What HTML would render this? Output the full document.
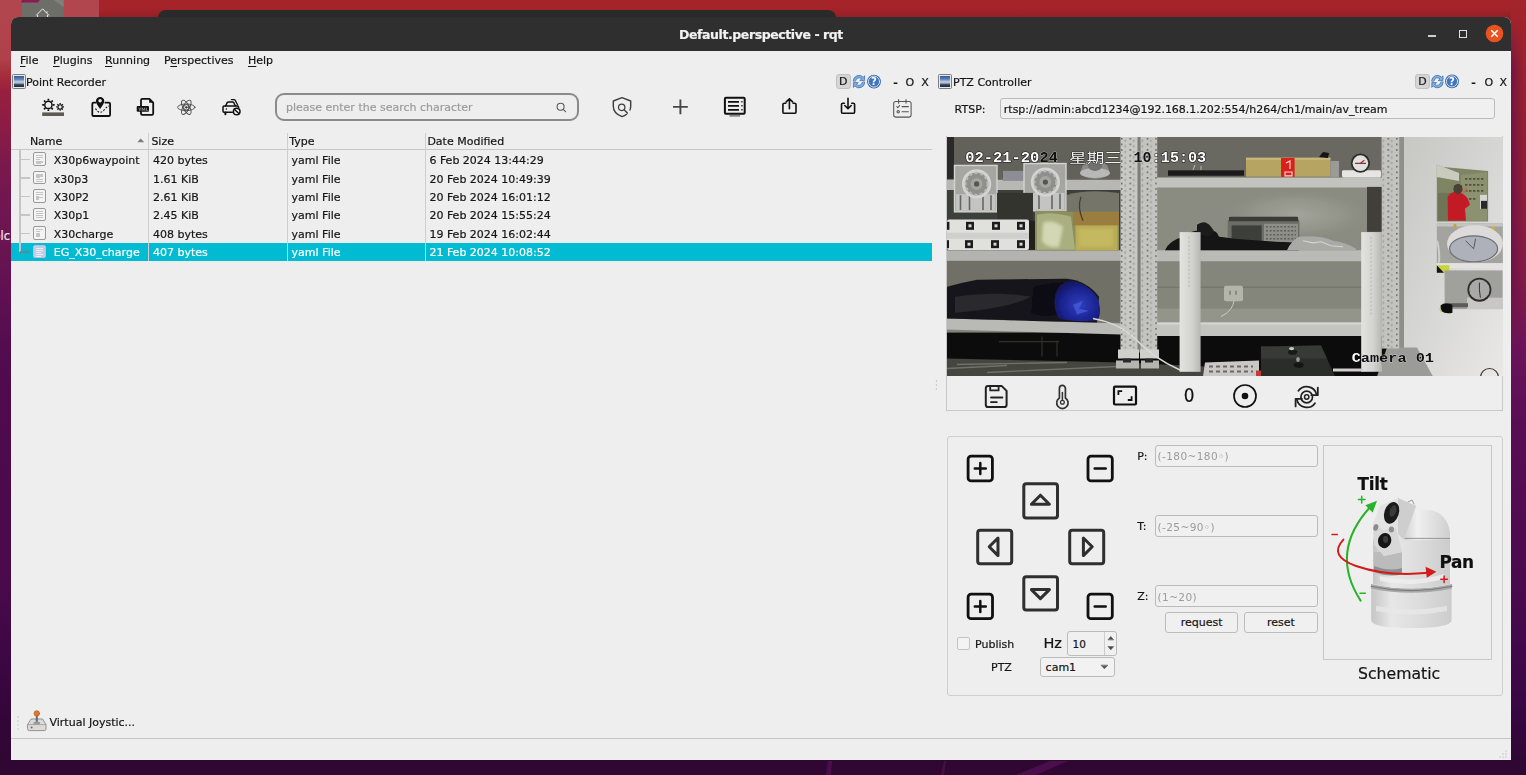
<!DOCTYPE html>
<html lang="en">
<head>
<meta charset="utf-8">
<title>Default.perspective - rqt</title>
<style>
html,body{margin:0;padding:0;}
body{width:1526px;height:775px;overflow:hidden;position:relative;background:#3a0a3a;
 font-family:"DejaVu Sans","Liberation Sans","Noto Sans CJK SC",sans-serif;font-size:11px;color:#161616;-webkit-text-stroke:.2px;}
.abs{position:absolute;}
#desk{position:absolute;left:0;top:0;width:1526px;height:775px;background:#a4242a;}
#deskB{position:absolute;left:0;top:755px;width:1526px;height:20px;background:#300733;}
#deskLs{position:absolute;left:0;top:0;width:14px;height:775px;
 background:linear-gradient(180deg,#b3454e 0px,#b0414c 58px,#a52c3c 76px,#981f3e 92px,#8a1c45 130px,#7d194b 160px,#72164f 200px,#6b1551 240px,#5e1051 300px,#510b4e 360px,#4d0a4d 450px,#4a0a4c 575px,#3e0844 650px,#330638 720px,#300733 760px);}
#deskRs{position:absolute;left:1506px;top:0;width:20px;height:775px;
 background:linear-gradient(180deg,#a3252b 0px,#9f232c 50px,#97202f 100px,#8e1e3a 200px,#821b48 280px,#6a135a 350px,#590e54 420px,#540c52 480px,#4c0a4e 575px,#40084a 650px,#360640 720px,#300733 760px);}
#deskRo{position:absolute;left:1506px;top:20px;width:20px;height:340px;background:linear-gradient(90deg,rgba(105,18,72,.8) 5px,rgba(105,18,72,0) 18px);
 -webkit-mask-image:linear-gradient(180deg,transparent 0,#000 50px,#000 270px,transparent 340px);mask-image:linear-gradient(180deg,transparent 0,#000 50px,#000 270px,transparent 340px);}
#deskL{position:absolute;left:0;top:0;width:99px;height:20px;background:#b2464f;}
#win{opacity:.9999;position:absolute;left:11px;top:17px;width:1500px;height:743.3px;background:#efefef;border-radius:7px 7px 0 0;overflow:hidden;}
#title{position:absolute;left:0;top:0;width:1500px;height:33.5px;background:#303030;}
#title .t{position:absolute;left:0;width:1500px;top:9.7px;text-align:center;color:#f3f3f3;font-weight:bold;font-size:12.5px;line-height:16px;letter-spacing:-0.42px;}
.menu{position:absolute;top:37px;font-size:11px;line-height:14px;}
.menu u{text-decoration-thickness:1px;text-underline-offset:1.5px;}
.docktitle{position:absolute;font-size:11px;line-height:14px;transform:translateY(.7px);white-space:nowrap;}
.hdr{position:absolute;top:117.5px;font-size:11px;line-height:13px;}
.row{position:absolute;left:0;width:921px;height:18.5px;}
.row span{position:absolute;top:3.7px;line-height:13px;white-space:nowrap;}
.row.sel{background:#00bcd4;color:#fff;}
.fi{position:absolute;left:22.2px;top:1.9px;width:10.7px;height:11.7px;border:1px solid #9a9a9a;border-radius:2px;background:#f5f5f5;box-sizing:content-box;}
.fi i{position:absolute;left:2.1px;height:1px;background:#c6c6c6;}
.vsep{position:absolute;width:1px;background:#cfcfcf;}
.le{position:absolute;border:1px solid #bcbcbc;border-radius:3px;background:#f1f1f1;box-sizing:border-box;}
.ph{-webkit-text-stroke:0;transform:translateY(.9px);position:absolute;font-size:10.5px;color:#9c9c9c;line-height:13px;letter-spacing:.4px;}
.btn{position:absolute;border:1px solid #bdbdbd;border-radius:3px;background:#f1f1f1;box-sizing:border-box;text-align:center;font-size:11px;}
</style>
</head>
<body>
<div id="desk"></div>
<div id="deskB"></div>
<svg class="abs" style="left:800px;top:758px;" width="300" height="17" viewBox="800 758 300 17"><path d="M826 775L828 761H832L831 775z" fill="#4b0e4d"/><path d="M941 775L944 761H946L944 775z" fill="#470d4a"/><path d="M1016 775L1050 761H1068L1036 775z" fill="#4a0e4c"/></svg>
<div id="deskLs"></div>
<div id="deskRs"></div>
<div id="deskRo"></div>
<div id="deskL"></div>
<div class="abs" style="left:99px;top:8px;width:1412px;height:12px;background:linear-gradient(180deg,rgba(120,20,30,0),rgba(110,18,30,.35));"></div>
<div class="abs" style="left:-6.5px;top:229px;font-size:11.5px;line-height:14px;color:#f2e6ee;">olc</div>
<!-- items peeking above the window -->
<svg class="abs" style="left:0;top:0;" width="120" height="20" viewBox="0 0 120 20"><rect x="21.6" y="0" width="18" height="3" fill="#8a1a50"/><path d="M21.6 20V4Q21.6 2.4 23.2 2.4H38L40 0H63.7V20z" fill="#6d6e68"/><path d="M54 0H63.7V7L58 3z" fill="#80817b"/><path d="M36.2 15.4L42.6 8.8L49 15.4M37.6 15V17M47.6 15V17M47 11.4V12.8" stroke="#f0f0f0" stroke-width="1" fill="none"/></svg>
<div class="abs" style="left:158px;top:10px;width:678px;height:10px;background:#2a2a2a;border-radius:8px 8px 0 0;"></div>

<div id="win">
 <div id="title"><div class="t">Default.perspective - rqt</div></div>

 <!-- title buttons -->
 <div class="abs" style="left:1417px;top:18px;width:8px;height:1.6px;background:#cfcfcf;"></div>
 <div class="abs" style="left:1448px;top:12.5px;width:8px;height:8px;border:1.5px solid #e0e0e0;box-sizing:border-box;"></div>
 <svg class="abs" style="left:1474px;top:7px;" width="19" height="19" viewBox="0 0 19 19"><circle cx="9.5" cy="9.5" r="8.8" fill="#e95420"/><path d="M6.3 6.3l6.4 6.4M12.7 6.3l-6.4 6.4" stroke="#fff" stroke-width="1.6" fill="none"/></svg>


 <!-- menu bar -->
 <div class="menu" style="left:9px;"><u>F</u>ile</div>
 <div class="menu" style="left:42px;"><u>P</u>lugins</div>
 <div class="menu" style="left:94px;"><u>R</u>unning</div>
 <div class="menu" style="left:153px;">P<u>e</u>rspectives</div>
 <div class="menu" style="left:237px;"><u>H</u>elp</div>


 <!-- left dock: Point Recorder -->
 <div class="abs" style="left:1.2px;top:57.4px;width:13.6px;height:14.4px;border:1px solid #7e7e7e;background:#e9e9e9;box-sizing:border-box;border-radius:1.5px;"><div style="position:absolute;left:1px;top:1px;right:1px;bottom:1px;background:linear-gradient(180deg,#2f5a96 0%,#5d86bd 30%,#c9d7e8 55%,#8d99a8 68%,#2c3f5f 80%,#1f2f4a 100%);"></div></div>
 <div class="docktitle" style="left:15px;top:58px;">Point Recorder</div>
 <div class="abs" style="left:825px;top:57.2px;width:14.6px;height:14.6px;background:#d6d6d6;border:1px solid #c2c2c2;box-sizing:border-box;border-radius:3px;text-align:center;font-size:11px;line-height:14.8px;">D</div>
 <div class="docktitle" style="left:882.2px;top:58px;font-weight:bold;">-</div>
 <div class="docktitle" style="left:894.6px;top:58px;">O</div>
 <div class="docktitle" style="left:910.2px;top:58px;">X</div>
 <!-- search field -->
 <div class="abs" style="left:263.5px;top:76px;width:304.4px;height:28.2px;border:2px solid #8c8c8c;border-radius:9px;box-sizing:border-box;"></div>
 <div class="abs" style="left:275px;top:83.5px;font-size:11px;line-height:14px;color:#9c9c9c;">please enter the search character</div>
 <!-- tree header -->
 <div class="hdr" style="left:18.9px;">Name</div>
 <div class="hdr" style="left:140.4px;">Size</div>
 <div class="hdr" style="left:278.3px;">Type</div>
 <div class="hdr" style="left:416.4px;">Date Modified</div>
 <svg class="abs" style="left:126px;top:120.6px;" width="8" height="5" viewBox="0 0 8 5"><path d="M0.3 4.2L3.7 0.5L7.2 4.2z" fill="#7d7d7d"/></svg>
 <div class="abs" style="left:0;top:132px;width:921px;height:1.3px;background:#c8c8c8;"></div>
 <div class="row" style="top:133.40px;"><div class="fi"><i style="top:2.0px;width:6.5px;height:1.0px;"></i><i style="top:4.0px;width:6.5px;height:1.0px;"></i><i style="top:6.0px;width:3.6px;height:1.0px;"></i><i style="top:8.0px;width:6.5px;height:1.6px;"></i><i style="top:9.6px;width:4.6px;height:1.0px;"></i></div><span style="left:42.8px;">X30p6waypoint</span><span style="left:142px;">420 bytes</span><span style="left:280.6px;">yaml File</span><span style="left:418.4px;">6 Feb 2024 13:44:29</span></div>
 <div class="row" style="top:151.85px;"><div class="fi"><i style="top:2.0px;width:6.5px;height:3.6px;"></i><i style="top:4.4px;width:4.0px;height:1.4px;"></i><i style="top:7.0px;width:6.5px;height:1.0px;"></i><i style="top:9.0px;width:6.5px;height:1.0px;"></i></div><span style="left:42.8px;">x30p3</span><span style="left:142px;">1.61 KiB</span><span style="left:280.6px;">yaml File</span><span style="left:418.4px;">20 Feb 2024 10:49:39</span></div>
 <div class="row" style="top:170.30px;"><div class="fi"><i style="top:2.0px;width:6.5px;height:1.0px;"></i><i style="top:4.0px;width:6.5px;height:1.0px;"></i><i style="top:6.0px;width:3.0px;height:3.0px;"></i><i style="top:7.0px;width:6.5px;height:1.2px;"></i><i style="top:9.0px;width:3.0px;height:1.0px;"></i></div><span style="left:42.8px;">X30P2</span><span style="left:142px;">2.61 KiB</span><span style="left:280.6px;">yaml File</span><span style="left:418.4px;">20 Feb 2024 16:01:12</span></div>
 <div class="row" style="top:188.75px;"><div class="fi"><i style="top:2.0px;width:6.5px;height:1.6px;"></i><i style="top:4.6px;width:6.5px;height:1.0px;"></i><i style="top:6.6px;width:6.5px;height:1.0px;"></i><i style="top:8.6px;width:6.5px;height:1.0px;"></i></div><span style="left:42.8px;">X30p1</span><span style="left:142px;">2.45 KiB</span><span style="left:280.6px;">yaml File</span><span style="left:418.4px;">20 Feb 2024 15:55:24</span></div>
 <div class="row" style="top:207.20px;"><div class="fi"><i style="top:2.0px;width:6.5px;height:1.0px;"></i><i style="top:4.2px;width:4.0px;height:1.0px;"></i><i style="top:6.0px;width:3.4px;height:3.4px;"></i><i style="top:9.4px;width:3.4px;height:1.0px;"></i></div><span style="left:42.8px;">X30charge</span><span style="left:142px;">408 bytes</span><span style="left:280.6px;">yaml File</span><span style="left:418.4px;">19 Feb 2024 16:02:44</span></div>
 <div class="row sel" style="top:225.65px;"><div class="fi" style="border-color:#b9c3dc;background:#c5cee6;"><i style="background:#e9edf7;top:2.0px;width:6.5px;height:1.4px;"></i><i style="background:#e9edf7;top:4.4px;width:6.5px;height:1.0px;"></i><i style="background:#e9edf7;top:6.4px;width:4.4px;height:1.0px;"></i><i style="background:#e9edf7;top:8.4px;width:6.5px;height:1.0px;"></i><i style="background:#e9edf7;top:10.0px;width:5.0px;height:1.0px;"></i></div><span style="left:42.8px;">EG_X30_charge</span><span style="left:142px;">407 bytes</span><span style="left:280.6px;">yaml File</span><span style="left:418.4px;">21 Feb 2024 10:08:52</span></div>
 <div class="abs" style="left:8.2px;top:133.4px;width:1.6px;height:101.8px;background:#c6c6c6;"></div>
 <div class="abs" style="left:8.6px;top:141.90px;width:10.4px;height:1.5px;background:#c6c6c6;"></div>
 <div class="abs" style="left:8.6px;top:160.35px;width:10.4px;height:1.5px;background:#c6c6c6;"></div>
 <div class="abs" style="left:8.6px;top:178.80px;width:10.4px;height:1.5px;background:#c6c6c6;"></div>
 <div class="abs" style="left:8.6px;top:197.25px;width:10.4px;height:1.5px;background:#c6c6c6;"></div>
 <div class="abs" style="left:8.6px;top:215.70px;width:10.4px;height:1.5px;background:#c6c6c6;"></div>
 <div class="abs" style="left:8.6px;top:234.15px;width:10.4px;height:1.5px;background:#5f8b93;"></div>
 <div class="vsep" style="left:137.4px;top:116px;height:128px;"></div>
 <div class="vsep" style="left:276.0px;top:116px;height:128px;"></div>
 <div class="vsep" style="left:414.0px;top:116px;height:128px;"></div>


 <!-- icon overlay in page coordinates -->
 <svg class="abs" style="left:-11px;top:-17px;pointer-events:none;z-index:5;" width="1526" height="775" viewBox="0 0 1526 775" fill="none" stroke-linecap="round" stroke-linejoin="round">
 <g id="tb-left">
  <circle cx="48.40" cy="104.90" r="3.60" fill="none" stroke="#111" stroke-width="1.45"/><path d="M52.70 104.90L54.60 104.90M51.44 107.94L52.78 109.28M48.40 109.20L48.40 111.10M45.36 107.94L44.02 109.28M44.10 104.90L42.20 104.90M45.36 101.86L44.02 100.52M48.40 100.60L48.40 98.70M51.44 101.86L52.78 100.52" stroke="#111" stroke-width="1.70" fill="none" stroke-linecap="butt"/><circle cx="60.10" cy="106.90" r="2.15" fill="none" stroke="#111" stroke-width="1.15"/><path d="M62.80 106.90L64.00 106.90M62.01 108.81L62.86 109.66M60.10 109.60L60.10 110.80M58.19 108.81L57.34 109.66M57.40 106.90L56.20 106.90M58.19 104.99L57.34 104.14M60.10 104.20L60.10 103.00M62.01 104.99L62.86 104.14" stroke="#111" stroke-width="1.30" fill="none" stroke-linecap="butt"/>
  <rect x="42.2" y="112.4" width="21.8" height="3.6" fill="#5b5b56"/>
  <path d="M95.6 102.7H93.6Q92.3 102.7 92.3 104V114.7Q92.3 116 93.6 116H108.8Q110.1 116 110.1 114.7V104Q110.1 102.7 108.8 102.7H105.4" stroke="#111" stroke-width="1.8"/>
  <path d="M100.1 108.9C98 105.8 95.9 103.6 95.9 101.1A4.2 4.2 0 0 1 104.3 101.1C104.3 103.6 102.2 105.8 100.1 108.9z" fill="#111"/>
  <circle cx="100.1" cy="100.8" r="1.7" fill="#efefef"/>
  <path d="M95.5 108.5Q99.5 115.5 104.5 109.5Q106.5 106.8 109 106" stroke="#111" stroke-width="1.1" stroke-dasharray="1.8 1.5" stroke-linecap="butt"/>
  <path d="M141 107V100.2Q141 98.8 142.4 98.8H149.4L153.2 102.6V113.4Q153.2 114.8 151.8 114.8H142.4Q141 114.8 141 113.4V111" stroke="#111" stroke-width="1.8"/>
  <path d="M149.2 98.8V102.8H153.2z" fill="#111"/>
  <rect x="136.7" y="105.9" width="12.3" height="5.8" rx="1" fill="#111"/>
  <text x="138.2" y="110.6" font-family="DejaVu Sans,Liberation Sans,sans-serif" font-weight="bold" font-size="4.4" fill="#8e8e8e">YML</text>
  <g stroke="#484848" stroke-width=".9">
   <ellipse cx="186.3" cy="107.3" rx="8.7" ry="3.3"/>
   <ellipse cx="186.3" cy="107.3" rx="8" ry="3.2" transform="rotate(60 186.3 107.3)"/>
   <ellipse cx="186.3" cy="107.3" rx="8" ry="3.2" transform="rotate(120 186.3 107.3)"/>
   <circle cx="186.3" cy="107.3" r="2.7"/><circle cx="186.3" cy="107.3" r=".9" fill="#3c3c3c"/>
  </g>
  <path d="M225.6 106L227.2 102.7Q227.6 101.9 228.6 101.9H232.4Q233.4 101.9 233.8 102.7L235.2 105.8" stroke="#111" stroke-width="1.5"/>
  <path d="M232.4 112.2H224Q223 112.2 223 111.2V107.2Q223 106.1 224 106.1H237.4Q238.6 106.1 238.6 107.2V107.6" stroke="#111" stroke-width="1.5"/>
  <path d="M225.4 112.4V114.2" stroke="#111" stroke-width="2"/>
  <circle cx="226.4" cy="109" r=".8" fill="#111"/>
  <path d="M231.4 99.6H234Q235 99.6 235.4 100.6L237.5 104.8" stroke="#111" stroke-width="1.3"/>
  <circle cx="236.7" cy="111.5" r="3.3" stroke="#111" stroke-width="1.5" fill="#efefef"/>
  <path d="M234.5 109.4L238.9 113.6" stroke="#111" stroke-width="1.4"/>
 </g>
 <g id="tb-right">
  <circle cx="560.6" cy="106.7" r="3.5" stroke="#5a5a5a" stroke-width="1.1"/>
  <path d="M563.2 109.4L565.6 111.6" stroke="#5a5a5a" stroke-width="1.1"/>
  <path d="M626.6 114.2Q624.6 115.8 622 116.6Q613.3 113.4 613.3 106.2V101L622 97.7L630.7 101V106.2Q630.7 108.4 630 110" stroke="#3d3d3d" stroke-width="1.4"/>
  <circle cx="621.7" cy="107.3" r="3.2" stroke="#3d3d3d" stroke-width="1.25"/>
  <path d="M624.1 109.8L627.4 113" stroke="#3d3d3d" stroke-width="1.3"/>
  <path d="M673 106.9H687.8M680.4 99.5V114.3" stroke="#484848" stroke-width="1.9" stroke-linecap="butt"/>
  <rect x="724.9" y="97.8" width="19.8" height="16" rx="1" stroke="#111" stroke-width="2"/>
  <path d="M728 101.8H739M728 105.8H739M728 109.8H739" stroke="#111" stroke-width="1.8" stroke-linecap="butt"/>
  <path d="M741.3 101.8H742.6M741.3 105.8H742.6M741.3 109.8H742.6" stroke="#111" stroke-width="1.5" stroke-linecap="butt"/>
  <rect x="729.5" y="115.1" width="10.6" height="1.5" fill="#777"/>
  <path d="M785.8 103.2H784.3Q782.9 103.2 782.9 104.6V111.9Q782.9 113.3 784.3 113.3H794.6Q796 113.3 796 111.9V104.6Q796 103.2 794.6 103.2H793.1" stroke="#111" stroke-width="1.6"/>
  <path d="M789.4 108.8V98.8M786.2 101.9L789.4 98.7L792.6 101.9" stroke="#111" stroke-width="1.6"/>
  <path d="M844.4 103.2H842.9Q841.5 103.2 841.5 104.6V111.9Q841.5 113.3 842.9 113.3H853.2Q854.6 113.3 854.6 111.9V104.6Q854.6 103.2 853.2 103.2H851.7" stroke="#111" stroke-width="1.6"/>
  <path d="M848 98.4V108.6M844.8 105.5L848 108.7L851.2 105.5" stroke="#111" stroke-width="1.6"/>
  <g stroke="#555" stroke-width="1.05">
   <rect x="893.7" y="101.5" width="17.4" height="15.6" rx="2"/>
   <path d="M898.6 99.6V103.2M906 99.6V103.2"/>
   <path d="M896.8 106.6L897.8 107.6L899.6 105.6M902 106.6H908.4M902 111.8H908.4"/>
   <circle cx="898.2" cy="111.8" r="1.2"/>
  </g>
 </g>
 <g id="dock-icons">
  <g transform="translate(852.0 74.6)"><path d="M1.2 6.2A5.8 5.8 0 0 1 11.2 2.6L12.6 1.2V6H7.8L9.6 4.2A3.6 3.6 0 0 0 3.6 6.2z" fill="#7fb2e3" stroke="#2f66a8" stroke-width=".7"/><path d="M12.8 7.8A5.8 5.8 0 0 1 2.8 11.4L1.4 12.8V8H6.2L4.4 9.8A3.6 3.6 0 0 0 10.4 7.8z" fill="#7fb2e3" stroke="#2f66a8" stroke-width=".7"/></g><circle cx="874.0" cy="81.6" r="6.9" fill="#2f62a8"/><circle cx="874.0" cy="81.6" r="5.6" fill="#3e76bf" stroke="#e8eef8" stroke-width=".9"/><text x="874.0" y="85.2" font-family="DejaVu Sans,Liberation Sans,sans-serif" font-weight="bold" font-size="10" fill="#fff" text-anchor="middle">?</text><g transform="translate(1430.4 74.6)"><path d="M1.2 6.2A5.8 5.8 0 0 1 11.2 2.6L12.6 1.2V6H7.8L9.6 4.2A3.6 3.6 0 0 0 3.6 6.2z" fill="#7fb2e3" stroke="#2f66a8" stroke-width=".7"/><path d="M12.8 7.8A5.8 5.8 0 0 1 2.8 11.4L1.4 12.8V8H6.2L4.4 9.8A3.6 3.6 0 0 0 10.4 7.8z" fill="#7fb2e3" stroke="#2f66a8" stroke-width=".7"/></g><circle cx="1452.0" cy="81.4" r="6.9" fill="#2f62a8"/><circle cx="1452.0" cy="81.4" r="5.6" fill="#3e76bf" stroke="#e8eef8" stroke-width=".9"/><text x="1452.0" y="85.0" font-family="DejaVu Sans,Liberation Sans,sans-serif" font-weight="bold" font-size="10" fill="#fff" text-anchor="middle">?</text>
 </g>

 <g id="ptz-buttons">
  <rect x="968.1" y="456.2" width="24.3" height="24.7" rx="3.0" stroke="#111" stroke-width="2.8"/><path d="M974.8 468.5H985.8M980.3 463V474" stroke="#111" stroke-width="2.5"/>
  <rect x="1088.0" y="456.2" width="24.3" height="24.7" rx="3.0" stroke="#111" stroke-width="2.8"/><path d="M1094.7 468.5H1105.7" stroke="#111" stroke-width="2.5"/>
  <rect x="968.1" y="594.2" width="24.4" height="24.5" rx="3.0" stroke="#111" stroke-width="2.8"/><path d="M974.8 606.5H985.8M980.3 601V612" stroke="#111" stroke-width="2.5"/>
  <rect x="1088.0" y="594.2" width="24.3" height="24.5" rx="3.0" stroke="#111" stroke-width="2.8"/><path d="M1094.7 606.5H1105.7" stroke="#111" stroke-width="2.5"/>
  <rect x="1023.8" y="483.8" width="33.7" height="34.1" rx="2.5" stroke="#303030" stroke-width="3.0"/><path d="M1040.4 495.2L1049.4 504.2H1031.4z" stroke="#303030" stroke-width="3"/>
  <rect x="1023.8" y="576.7" width="33.7" height="33.4" rx="2.5" stroke="#303030" stroke-width="3.0"/><path d="M1040.4 598.6L1049.4 589.6H1031.4z" stroke="#303030" stroke-width="3"/>
  <rect x="977.7" y="530.2" width="34.0" height="33.5" rx="2.5" stroke="#303030" stroke-width="3.0"/><path d="M989.2 546.8L998 538V555.6z" stroke="#303030" stroke-width="3"/>
  <rect x="1069.7" y="530.2" width="34.0" height="33.5" rx="2.5" stroke="#303030" stroke-width="3.0"/><path d="M1092.2 546.8L1083.4 538V555.6z" stroke="#303030" stroke-width="3"/>
  <path d="M1108.2 639.6L1110.8 636.6L1113.4 639.6z" fill="#4a4a4a" stroke="#4a4a4a" stroke-width=".6"/>
  <path d="M1108.2 646.8L1110.8 649.8L1113.4 646.8z" fill="#4a4a4a" stroke="#4a4a4a" stroke-width=".6"/>
  <path d="M1101.2 665.4L1104.4 668.8L1107.6 665.4z" fill="#555" stroke="#555" stroke-width=".6"/>
 </g>
 <g id="video-tools">
  <path d="M988.2 385.9H1001.6L1006.6 390.9V404.7Q1006.6 407.1 1004.2 407.1H988.2Q985.8 407.1 985.8 404.7V388.3Q985.8 385.9 988.2 385.9z" stroke="#222" stroke-width="2"/>
  <path d="M990.2 386.2V390.4H998.6V386.2" stroke="#222" stroke-width="1.8"/>
  <path d="M991 397.5H1002.4M991 402.2H996.8" stroke="#222" stroke-width="1.8"/>
  <path d="M1059.4 398V388.4A3 3 0 0 1 1065.4 388.4V398A5.7 5.7 0 1 1 1059.4 398z" stroke="#333" stroke-width="1.7"/>
  <path d="M1062.4 392.6V399.6" stroke="#333" stroke-width="1.5"/><circle cx="1062.4" cy="402.2" r="1.9" stroke="#333" stroke-width="1.3"/>
  <rect x="1114" y="386.7" width="22" height="17.8" rx="1" stroke="#111" stroke-width="2.2"/>
  <path d="M1118.4 395V391.2H1122.2M1131.6 396.2V400H1127.8" stroke="#111" stroke-width="1.8" stroke-linecap="butt" stroke-linejoin="miter"/>
  <circle cx="1245" cy="396" r="11" stroke="#111" stroke-width="1.7"/><circle cx="1245" cy="396" r="3.3" fill="#111"/>
  <circle cx="1306.7" cy="397" r="5.8" stroke="#222" stroke-width="1.7"/><circle cx="1306.7" cy="397" r="2.2" stroke="#222" stroke-width="1.5"/>
  <path d="M1298.4 390.8A10.2 10.2 0 0 1 1316.6 394.6M1315 403.2A10.2 10.2 0 0 1 1296.8 399.4" stroke="#222" stroke-width="1.8"/>
  <path d="M1317.8 387.6V395.2H1311.4M1295.6 406.4V398.8H1302" stroke="#222" stroke-width="1.8"/>
 </g>

 <g id="schematic">
  <defs>
   <linearGradient id="cb" x1="0" y1="0" x2="1" y2="0"><stop offset="0" stop-color="#c6c6c6"/><stop offset=".25" stop-color="#e8e8e8"/><stop offset=".6" stop-color="#dddddd"/><stop offset="1" stop-color="#cdcdcd"/></linearGradient>
   <linearGradient id="cb2" x1="0" y1="0" x2="1" y2="0"><stop offset="0" stop-color="#c9c9c9"/><stop offset=".35" stop-color="#f1f1f1"/><stop offset="1" stop-color="#d0d0d0"/></linearGradient>
   <filter id="sb" x="-5%" y="-5%" width="110%" height="110%"><feGaussianBlur stdDeviation="0.5"/></filter>
  </defs>
  <g filter="url(#sb)" stroke="none">
   <!-- base cylinder -->
   <path d="M1371.2 588V620Q1371.2 628 1411.4 628Q1451.6 628 1451.6 620V588z" fill="url(#cb)"/>
   <path d="M1376 606Q1411 613 1447 606V611Q1411 618 1376 611z" fill="#e9e9e9" opacity=".8"/>
   <!-- rings -->
   <path d="M1371 584Q1411 593 1452 584V588.4Q1411 597 1371 588.4z" fill="#a9a9a9"/>
   <path d="M1371 586.4Q1411 595 1452 586.4" stroke="#6e6e6e" stroke-width=".8" fill="none"/>
   <!-- upper body -->
   <path d="M1373 540Q1373 534 1380 534H1443Q1450 534 1450 540V584Q1411 593 1373 584z" fill="url(#cb)"/>
   <path d="M1374 552H1402V572Q1388 574 1374 570z" fill="#bcbcbc"/>
   <path d="M1374 566Q1390 572 1402 568V574Q1390 578 1374 572z" fill="#8f8f8f"/>
   <path d="M1380 576Q1411 584 1444 574V579Q1411 588 1380 581z" fill="#f0f0f0" opacity=".8"/>
   <!-- dome -->
   <path d="M1400 540Q1398 514 1420 510Q1446 508 1450 532V540z" fill="url(#cb2)"/>
   <path d="M1401 538.4H1449.6" stroke="#8d8d8d" stroke-width=".9"/>
   <!-- camera head -->
   <path d="M1380 506L1398 498L1416 506L1404 540L1402 552L1384 556L1374 544L1373 524z" fill="#e4e4e4"/>
   <path d="M1398 498L1416 506L1404 540L1398 534z" fill="#cfcfcf"/>
   <path d="M1373 524L1384 530L1396 528L1402 552L1384 556L1374 544z" fill="#d9d9d9"/>
   <ellipse cx="1391.6" cy="512.8" rx="7.2" ry="11.2" transform="rotate(18 1391.6 512.8)" fill="#1c1c1c"/>
   <ellipse cx="1393" cy="511" rx="3.2" ry="6" transform="rotate(18 1393 511)" fill="#3b3b3b"/>
   <ellipse cx="1384.6" cy="540.6" rx="6.6" ry="7.6" transform="rotate(18 1384.6 540.6)" fill="#161616"/>
   <ellipse cx="1385.6" cy="539.4" rx="2.6" ry="3.4" fill="#3a3a3a"/>
   <ellipse cx="1375.8" cy="527.4" rx="2.4" ry="3.4" transform="rotate(18 1375.8 527.4)" fill="#8b8b8b"/>
   <ellipse cx="1391.4" cy="529.4" rx="2.6" ry="3" fill="#8f8f8f"/>
   <path d="M1408 502l4 -2l2 4" stroke="#9a9a9a" stroke-width="1" fill="none"/>
  </g>
  <!-- tilt arrow (green) -->
  <path d="M1360.6 600.6Q1329 552 1370.4 506.8" stroke="#27b527" stroke-width="2" fill="none"/>
  <path d="M1377 500.8L1365.4 505.2L1372.6 512.6z" fill="#27b527" stroke="none"/>
  <path d="M1358.4 499.6H1365M1361.7 496.3V502.9" stroke="#27b527" stroke-width="1.5"/>
  <path d="M1360 593.2H1365.4" stroke="#27b527" stroke-width="1.5"/>
  <!-- pan arrow (red) -->
  <path d="M1343.4 539.6Q1328 556 1356 566Q1388 577 1428 572.8" stroke="#d31c1c" stroke-width="2" fill="none"/>
  <path d="M1436.4 571.8L1425.6 566.8L1426.8 577.8z" fill="#d31c1c" stroke="none"/>
  <path d="M1332 534.6H1337.4" stroke="#d31c1c" stroke-width="1.5"/>
  <path d="M1440.8 579.2H1447.4M1444.1 575.9V582.5" stroke="#d31c1c" stroke-width="1.5"/>
 </g>
 <g id="joystick">
  <path d="M27.6 724.6L31 719H42.6L46 724.6V729Q46 730.6 44.4 730.6H29.2Q27.6 730.6 27.6 729z" fill="#dcdcda" stroke="#8a8a88" stroke-width=".9"/>
  <path d="M27.6 724.6H46" stroke="#9a9a98" stroke-width=".8"/>
  <path d="M36.8 723V714.6" stroke="#6b6b6b" stroke-width="2"/>
  <circle cx="36.8" cy="713.4" r="2.7" fill="#e07a2f" stroke="#b5561a" stroke-width=".7"/>
  <ellipse cx="36.8" cy="723" rx="3.4" ry="1.5" fill="#9b9b99"/>
  <circle cx="31.6" cy="727.4" r="1" fill="#c04a3a"/>
 </g>
 <g id="grips" fill="#bdbdbd" stroke="none">
  <circle cx="18" cy="717" r=".7"/><circle cx="18" cy="721" r=".7"/><circle cx="18" cy="725" r=".7"/><circle cx="18" cy="729" r=".7"/>
  <circle cx="936.4" cy="381" r=".7"/><circle cx="936.4" cy="385" r=".7"/><circle cx="936.4" cy="389" r=".7"/>
  <circle cx="1506" cy="757" r=".7"/><circle cx="1503" cy="757" r=".7"/><circle cx="1506" cy="754" r=".7"/><circle cx="1500" cy="757" r=".7"/><circle cx="1503" cy="754" r=".7"/><circle cx="1506" cy="751" r=".7"/>
 </g>


 </svg>

 <!-- right dock: PTZ Controller -->
 <div class="abs" style="left:927.2px;top:57.4px;width:13.6px;height:14.4px;border:1px solid #7e7e7e;background:#e9e9e9;box-sizing:border-box;border-radius:1.5px;"><div style="position:absolute;left:1px;top:1px;right:1px;bottom:1px;background:linear-gradient(180deg,#2f5a96 0%,#5d86bd 30%,#c9d7e8 55%,#8d99a8 68%,#2c3f5f 80%,#1f2f4a 100%);"></div></div>
 <div class="docktitle" style="left:942px;top:58px;">PTZ Controller</div>
 <div class="abs" style="left:1404.3px;top:57.2px;width:14.6px;height:14.6px;background:#d6d6d6;border:1px solid #c2c2c2;box-sizing:border-box;border-radius:3px;text-align:center;font-size:11px;line-height:14.8px;">D</div>
 <div class="docktitle" style="left:1460.2px;top:58px;font-weight:bold;">-</div>
 <div class="docktitle" style="left:1473.4px;top:58px;">O</div>
 <div class="docktitle" style="left:1488.6px;top:58px;">X</div>
 <div class="docktitle" style="left:943.6px;top:84.5px;">RTSP:</div>
 <div class="le" style="left:989.3px;top:81.2px;width:494.5px;height:21.3px;"></div>
 <div class="docktitle" style="left:992.8px;top:84.6px;">rtsp://admin:abcd1234@192.168.1.202:554/h264/ch1/main/av_tream</div>
 <!-- video frame + toolbar -->
 <div class="abs" style="left:935px;top:119px;width:557px;height:275px;border:1px solid #c9c9c9;border-top:none;box-sizing:border-box;"></div>

 <svg class="abs" style="left:936px;top:119.7px;" width="555.5" height="238.9" viewBox="0 0 555.5 239.4" preserveAspectRatio="none">
  <defs>
   <filter id="b1" x="-5%" y="-5%" width="110%" height="110%"><feGaussianBlur stdDeviation="0.7"/></filter>
   <filter id="b2" x="-40%" y="-40%" width="180%" height="180%"><feGaussianBlur stdDeviation="1.6"/></filter>
   <linearGradient id="wallg" x1="0" y1="0" x2="0" y2="1"><stop offset="0" stop-color="#55574f"/><stop offset=".18" stop-color="#74766c"/><stop offset=".45" stop-color="#8a8c81"/><stop offset=".8" stop-color="#84867b"/><stop offset="1" stop-color="#6d6f66"/></linearGradient>
   <linearGradient id="rwall" x1="0" y1="0" x2="1" y2="1"><stop offset="0" stop-color="#c6c7c4"/><stop offset=".5" stop-color="#d6d7d5"/><stop offset="1" stop-color="#e9e9e8"/></linearGradient>
   <linearGradient id="pillar" x1="0" y1="0" x2="1" y2="0"><stop offset="0" stop-color="#e3e4e1"/><stop offset=".6" stop-color="#d2d3cf"/><stop offset="1" stop-color="#b7b8b3"/></linearGradient>
   <pattern id="holes" width="8.6" height="5.6" patternUnits="userSpaceOnUse"><rect x="2" y="1" width="1.3" height="1.5" fill="#4a4c48"/><ellipse cx="6.2" cy="3.8" rx=".9" ry="1.4" fill="#9fa19c"/></pattern>
   <radialGradient id="glow"><stop offset="0" stop-color="#a3a59b"/><stop offset=".6" stop-color="#97998f" stop-opacity=".7"/><stop offset="1" stop-color="#8b8d82" stop-opacity="0"/></radialGradient>
   <radialGradient id="blue" cx=".55" cy=".6" r=".6"><stop offset="0" stop-color="#2f3fbd"/><stop offset=".65" stop-color="#1b2592"/><stop offset="1" stop-color="#121760"/></radialGradient>
  </defs>
  <rect width="555.5" height="239.4" fill="url(#wallg)"/>

  <g filter="url(#b1)">
   <!-- back wall tonal areas -->
   <rect x="0" y="0" width="174" height="42" fill="#62645c"/>
   <rect x="0" y="0" width="7" height="42" fill="#2b2c29"/>
   <rect x="210" y="0" width="226" height="41" fill="#696b62"/>
   <rect x="210" y="50" width="225" height="64" fill="#8b8d82"/>
   <ellipse cx="350" cy="78" rx="75" ry="26" fill="url(#glow)"/>
   <rect x="210" y="124" width="225" height="62" fill="#85877c"/>
   <rect x="210" y="150" width="225" height="1" fill="#6f7168"/>
   <rect x="210" y="172" width="225" height="14" fill="#94968b"/>
   <rect x="0" y="124" width="174" height="62" fill="#6f7168"/>
   <rect x="0" y="52" width="174" height="62" fill="#3e3f3a"/>
   <!-- bottom dark zone + floor -->
   <rect x="0" y="196" width="456" height="44" fill="#0f110e"/>
   <path d="M0 222L175 226L300 232V240H0z" fill="#44463f"/>
   <path d="M10 228L120 226M40 236L170 230M0 232L60 229" stroke="#70726b" stroke-width="1.4"/>
   <path d="M52 205h60M95 200v20M110 204v16" stroke="#2e302c" stroke-width="1.2"/>
   <!-- shelf beams -->
   <path d="M0 43H174V53H0z" fill="#b7b9b4"/>
   <path d="M210 40.5H436V50.5H210z" fill="#c2c4bf"/>
   <path d="M0 113.6H174V124H0z" fill="#b3b5b0"/>
   <path d="M210 113.6H436V124.4H210z" fill="#babcb7"/>
   <path d="M0 182L174 187V198L0 193z" fill="#b9bbb6"/>
   <path d="M210 186H436V199.4H210z" fill="#c3c5c0"/>
   <path d="M210 186H436V188H210z" fill="#d6d7d3"/>
   <!-- right white wall -->
   <rect x="452" y="0" width="104" height="240" fill="url(#rwall)"/>
   <path d="M452 0h5v240h-5z" fill="#8e908b"/>
   <path d="M440 211L470 211L486 240H430z" fill="#9b9c99"/>
   <!-- vertical posts -->
   <rect x="190" y="0" width="4" height="216" fill="#7d7f7a"/>
   <rect x="173.5" y="0" width="17" height="216" fill="#c8cac5"/><rect x="173.5" y="0" width="17" height="216" fill="url(#holes)"/>
   <rect x="193.6" y="0" width="16.6" height="216" fill="#c3c5c0"/><rect x="193.6" y="0" width="16.6" height="216" fill="url(#holes)"/>
   <rect x="434.6" y="0" width="17.6" height="212" fill="#c3c5c0"/><rect x="434.6" y="0" width="17.6" height="212" fill="url(#holes)"/>
   <!-- post feet -->
   <path d="M171 213h21v9h-21zM193 213h19v9h-19z" fill="#cfd0cd"/>
   <path d="M169 224h23v8h-23zM194 224h18v8h-18z" fill="#b4b5b2"/>
   <path d="M176 222h8v4h-8zM198 222h8v4h-8z" fill="#2a2a2a"/>
  </g>

  <g filter="url(#b1)">
   <!-- left bay, upper shelf: fans + bowl -->
   <rect x="56" y="34" width="22" height="10" fill="#8d8f96"/>
   <rect x="7.5" y="28.5" width="42.5" height="46.5" fill="#a5a7a3"/><rect x="7.5" y="28.5" width="42.5" height="46.5" fill="none" stroke="#d4d5d3" stroke-width="1.4"/><rect x="9.0" y="57.3" width="39.5" height="16.7" fill="#c4c5c3"/><path d="M13.5 58.3v14.9M22.5 58.3v14.9M36.0 58.3v14.9M44.0 58.3v14.9" stroke="#666863" stroke-width="1.6"/><circle cx="29.6" cy="47.0" r="14.6" fill="#d3d4d2"/><circle cx="29.6" cy="47.0" r="11.4" fill="#8f918d"/><circle cx="29.6" cy="47.0" r="11" fill="none" stroke="#b9bab7" stroke-width="2.2" stroke-dasharray="3 2.5"/><circle cx="29.6" cy="47.0" r="6" fill="#a4a6a2"/><circle cx="29.6" cy="47.0" r="2.6" fill="#55574f"/><rect x="77.0" y="26.6" width="42.0" height="47.4" fill="#a5a7a3"/><rect x="77.0" y="26.6" width="42.0" height="47.4" fill="none" stroke="#d4d5d3" stroke-width="1.4"/><rect x="78.5" y="56.0" width="39.0" height="17.1" fill="#c4c5c3"/><path d="M83.0 56.9v15.2M92.0 56.9v15.2M105.0 56.9v15.2M113.0 56.9v15.2" stroke="#666863" stroke-width="1.6"/><circle cx="98.4" cy="45.2" r="14.6" fill="#d3d4d2"/><circle cx="98.4" cy="45.2" r="11.4" fill="#8f918d"/><circle cx="98.4" cy="45.2" r="11" fill="none" stroke="#b9bab7" stroke-width="2.2" stroke-dasharray="3 2.5"/><circle cx="98.4" cy="45.2" r="6" fill="#a4a6a2"/><circle cx="98.4" cy="45.2" r="2.6" fill="#55574f"/>
   <path d="M134 33Q136 24 148 23Q160 24 162 33Q163 41 148 42Q133 41 134 33z" fill="#8a8c8a"/>
   <ellipse cx="148" cy="36" rx="15" ry="5" fill="#b8b9b8"/><ellipse cx="148" cy="29" rx="7" ry="5" fill="#70726e"/>
   <!-- left bay, middle: QR board + wrapped boxes -->
   <rect x="50" y="56" width="36" height="28" fill="#33342f"/>
   <rect x="0" y="82.8" width="82" height="30.4" rx="2" fill="#e0e1de"/>
   <rect x="0" y="96" width="82" height="6" fill="#cfd0cc"/>
   <rect x="19.0" y="85.0" width="8" height="8" fill="#1a1a1a"/><rect x="21.5" y="87.5" width="3" height="3" fill="#d8d8d8"/><rect x="45.0" y="85.0" width="8" height="8" fill="#1a1a1a"/><rect x="47.5" y="87.5" width="3" height="3" fill="#d8d8d8"/><rect x="70.0" y="85.0" width="8" height="8" fill="#1a1a1a"/><rect x="72.5" y="87.5" width="3" height="3" fill="#d8d8d8"/><rect x="18.0" y="103.4" width="8" height="8" fill="#1a1a1a"/><rect x="20.5" y="105.9" width="3" height="3" fill="#d8d8d8"/><rect x="44.0" y="103.4" width="8" height="8" fill="#1a1a1a"/><rect x="46.5" y="105.9" width="3" height="3" fill="#d8d8d8"/><rect x="70.0" y="103.4" width="8" height="8" fill="#1a1a1a"/><rect x="72.5" y="105.9" width="3" height="3" fill="#d8d8d8"/><rect x="0" y="85" width="2.4" height="8" fill="#1a1a1a"/><rect x="0" y="103.4" width="2" height="8" fill="#1a1a1a"/>
   <rect x="82" y="84" width="7" height="29" fill="#20211e"/>
   <rect x="88" y="74" width="84" height="39.6" fill="#8b9060"/>
   <path d="M90 78Q104 74 124 80L128 113H90z" fill="#aab082"/>
   <path d="M96 86Q106 82 116 90L112 110Q100 112 95 104z" fill="#d3d8b4" filter="url(#b2)"/>
   <rect x="126" y="75" width="46" height="14" fill="#9b7f3f"/>
   <path d="M120 58Q140 52 172 56V75H120z" fill="#74766a"/>
   <rect x="128.5" y="88.6" width="42" height="25" fill="#b9ad56"/>
   <rect x="132" y="92" width="34" height="18" fill="#c4b962" filter="url(#b2)"/>
   <path d="M134 60Q130 70 136 84" stroke="#4a4030" stroke-width="1.3" fill="none"/>
   <!-- left bay, lower: black duffel + blue bag -->
   <path d="M0 150Q14 146 30 143L120 142Q140 144 152 160L150 186L0 182z" fill="#19191b"/>
   <path d="M8 160Q50 154 84 160Q60 172 8 176z" fill="#2a2a2e"/>
   <path d="M86 150Q110 144 122 146L112 178Q96 182 84 176z" fill="#101012"/>
   <path d="M108 160Q110 146 124 144Q140 146 150 160Q156 176 150 184Q128 186 112 182Q106 172 108 160z" fill="url(#blue)"/>
   <path d="M126 168l10 -4l-4 8l10 2l-12 4z" fill="#4a5fe0" opacity=".7"/>
   <!-- right bay, top shelf: cardboard box, gauge -->
   <rect x="221" y="33.4" width="76" height="5.4" fill="#1d1d1d"/>
   <path d="M246 33l2 -5M254 33v-4" stroke="#bbb" stroke-width="1"/>
   <rect x="299" y="20.8" width="84.4" height="19" fill="#b6a664"/>
   <rect x="299" y="20.8" width="84.4" height="2" fill="#c9bb7c"/>
   <rect x="334" y="21" width="13.6" height="19" fill="#d9221f"/>
   <path d="M339 26l4 -2v8M338 35h7v4h-7z" stroke="#f2dcd8" stroke-width="1.1" fill="none"/>
   <path d="M372 20l4 -5l6 1l-1 5z" fill="#161616"/>
   <rect x="383.4" y="24" width="8.6" height="16" fill="#9a9c97"/>
   <rect x="395" y="33.2" width="39" height="7.4" rx="1.5" fill="#e6e6e3"/>
   <circle cx="413.4" cy="26.2" r="9.6" fill="#2e2e2e"/><circle cx="413.4" cy="26.2" r="7.8" fill="#e3e2e0"/>
   <path d="M408 26.5h11M413.4 26.2l4 -3" stroke="#8a3030" stroke-width="1.2"/>
   <!-- right bay, middle shelf: oscilloscope, cables, wrap -->
   <rect x="420" y="50" width="14.6" height="45" fill="#3f403b"/>
   <path d="M280.6 84L284 80H350L352.4 84V109H280.6z" fill="#6c6e67"/>
   <rect x="282" y="80" width="69" height="4.4" fill="#3b3c37"/>
   <rect x="284.6" y="88.6" width="30" height="15.6" fill="#3e403b"/>
   <rect x="317" y="87" width="34" height="19" fill="#8e908a"/>
   <path d="M319 90h30M319 94h30M319 98h30M319 102h30" stroke="#5c5e58" stroke-width="1.5" stroke-dasharray="2 1.6"/>
   <path d="M218 113.6Q222 104 236 100Q250 90 258 96Q268 90 272 100Q300 104 352 106L352 113.6z" fill="#121212"/>
   <path d="M250 88Q258 82 264 90Q270 96 262 100Q252 100 250 94z" fill="#1b1b1b"/>
   <path d="M352 100Q372 98 386 104Q400 106 409 112V113.6H340Q344 104 352 100z" fill="#a9aaa7"/>
   <path d="M356 104l10 2l8 -1l10 4l12 1" stroke="#d4d5d2" stroke-width="1.2" fill="none"/>
   <!-- right bay, lower: socket + cable -->
   <rect x="277" y="149" width="19" height="15.6" rx="2" fill="#b3b5ab"/>
   <path d="M283 154v4M289 154v4" stroke="#6b6d64" stroke-width="1.2"/>
   <path d="M287 164Q286 174 274 180" stroke="#c9cac4" stroke-width="1" fill="none"/>
   <!-- white short pillars -->
   <rect x="232.6" y="95.3" width="21" height="140" fill="url(#pillar)"/>
   <rect x="414.2" y="95.3" width="20.6" height="140" fill="url(#pillar)"/>
   <path d="M242 100v50M424 100v80" stroke="#b9bab6" stroke-width="1.2" stroke-dasharray="2 2"/>
   <!-- bottom: white cable, power strip, black box -->
   <path d="M146 182Q170 186 186 200Q206 222 234 234" stroke="#d9dad6" stroke-width="1.5" fill="none"/>
   <path d="M258 226L312 224V240H256z" fill="#c9c9c7"/>
   <path d="M262 230h44M262 235h44" stroke="#6b6b69" stroke-width="2" stroke-dasharray="4 3"/>
   <path d="M309 234h6v6h-6z" fill="#c43a3a"/>
   <path d="M314 210L374 209L388 240H314z" fill="#2b2d2a"/>
   <path d="M314 210L374 209L380 222H314z" fill="#393b37"/>
   <ellipse cx="345.6" cy="215.6" rx="4.6" ry="2.6" fill="#1a1a1a"/><ellipse cx="344.6" cy="212" rx="2.6" ry="1.6" fill="#c9c9c9"/>
   <ellipse cx="351.6" cy="228.6" rx="5" ry="2.8" fill="#151515"/><ellipse cx="351" cy="223" rx="1.8" ry="2.6" fill="#9a9a9a"/>
   <path d="M386 232h30v3h-30z" fill="#d0d0ce"/>
   <!-- right wall: photos -->
   <path d="M489.8 27.6L496 30L541.1 34V84.7H489.8z" fill="#7f8664"/>
   <path d="M489.8 27.6L512 36V44L489.8 40z" fill="#c9ccc0"/>
   <path d="M514 38L540 35V84H514z" fill="#8c9270"/>
   <path d="M518 42h20M518 48h20M518 54h20M518 62h12" stroke="#4e5340" stroke-width="1.6" stroke-dasharray="2.4 1.6"/>
   <rect x="533" y="58" width="7" height="14" fill="#d5d6d2"/><rect x="534" y="64" width="6" height="8" fill="#2c2c2c"/>
   <path d="M491 56h16v28h-16z" fill="#707559"/>
   <path d="M500.6 60Q504 54 512 55Q521 58 523 68L518 72L519 84H501z" fill="#c21f26"/>
   <ellipse cx="511" cy="52" rx="4.6" ry="5" fill="#4a3f36"/>
   <path d="M516 56l4 -5" stroke="#b0784f" stroke-width="2.4"/>
   <rect x="489.8" y="86.6" width="66" height="40" fill="#a3a4a1"/>
   <path d="M489.8 86.6h66v3h-66z" fill="#c4c5c2"/>
   <circle cx="508" cy="88.6" r="1.6" fill="#c9a52c"/><circle cx="546" cy="92" r="2" fill="#d1b12f"/>
   <ellipse cx="528" cy="107" rx="28" ry="18.6" fill="#dcdcda"/>
   <ellipse cx="526.6" cy="112" rx="24" ry="13" fill="#aeb2bb"/>
   <ellipse cx="526.6" cy="112" rx="24" ry="13" fill="none" stroke="#6d7078" stroke-width="1.2"/>
   <path d="M526.6 112l-8 -8M526.6 112l2 -10" stroke="#555862" stroke-width="1"/>
   <path d="M490 104q3 10 2 22" stroke="#cfcfcd" stroke-width="2" fill="none"/>
   <rect x="489.8" y="126.4" width="66" height="5.2" fill="#e3e3e1"/>
   <path d="M489.8 128.4L502.4 128.4L502.4 136L497 136z" fill="#c9d43a"/>
   <path d="M489.8 128.4L497 136H489.8z" fill="#151515"/>
   <rect x="497.6" y="133.7" width="58" height="38.8" fill="#a0a19e"/>
   <rect x="520" y="161" width="36" height="11.4" fill="#c8c8c6"/>
   <rect x="503" y="166.6" width="18" height="4" fill="#5b5c58"/>
   <circle cx="532.4" cy="153" r="12" fill="#2d2d2d"/><circle cx="532.4" cy="153" r="10.2" fill="#a9aaa8"/>
   <path d="M532.4 153v-7M532.4 153l1 8" stroke="#333" stroke-width="1"/>
   <path d="M493.7 168.6Q498 165 505.4 168V176Q499 178 493.7 174z" fill="#111"/>
   <path d="M492.6 172l2 3" stroke="#c9d43a" stroke-width="1.4"/>
   <circle cx="542.5" cy="241" r="9" fill="none" stroke="#3a3a3a" stroke-width="1.2"/>
  </g>

  <g font-family="Liberation Mono,DejaVu Sans Mono,Noto Sans CJK SC,monospace" font-weight="bold" font-size="14.4" stroke="#111" stroke-width="1.1" paint-order="stroke" stroke-linejoin="round">
   <text x="18.2" y="24.8" textLength="74.2" lengthAdjust="spacingAndGlyphs" fill="#fff">02-21-20</text>
   <text x="92.6" y="24.8" textLength="18.4" lengthAdjust="spacingAndGlyphs" fill="#111" stroke="#ddd" stroke-width=".5">24</text>
   <text x="122" y="24.6" textLength="53" lengthAdjust="spacingAndGlyphs" fill="#f4f4f4" font-size="13" font-weight="normal" font-family="Noto Sans CJK SC,WenQuanYi Zen Hei,sans-serif" stroke-width=".7">星期三</text>
   <text x="186.6" y="24.8" textLength="18" lengthAdjust="spacingAndGlyphs" fill="#111" stroke="#ddd" stroke-width=".5">10</text>
   <text x="204.8" y="24.8" textLength="54.4" lengthAdjust="spacingAndGlyphs" fill="#fff">:15:03</text>
   <text x="404.7" y="225.6" textLength="9" lengthAdjust="spacingAndGlyphs" fill="#fff" font-size="13.6">C</text>
   <text x="413.8" y="225.6" textLength="73.2" lengthAdjust="spacingAndGlyphs" fill="#111" stroke="#e8e8e8" stroke-width=".5" font-size="13.6">amera 01</text>
  </g>



 </svg>

 <div class="abs" style="left:1168.4px;top:366.6px;width:20px;text-align:center;font-size:19.6px;line-height:24px;color:#111;transform:scaleX(.86);">0</div>
 <!-- PTZ panel -->
 <div class="abs" style="left:936.3px;top:418.5px;width:556px;height:260px;border:1px solid #cfcfcf;border-radius:3px;box-sizing:border-box;"></div>
 <div class="abs" style="left:946px;top:620px;width:13.2px;height:12.8px;border:1px solid #c4c4c4;border-radius:2px;background:#f4f4f4;box-sizing:border-box;"></div>
 <div class="docktitle" style="left:964px;top:620px;">Publish</div>
 <div class="abs" style="left:1032.4px;top:616px;font-size:14.5px;line-height:20px;">Hz</div>
 <div class="le" style="left:1055.9px;top:613.6px;width:50.4px;height:25.6px;"></div>
 <div class="abs" style="left:1092.8px;top:614.6px;width:1px;height:23.6px;background:#cdcdcd;"></div>
 <div class="abs" style="left:1061.5px;top:620.6px;font-size:10.5px;line-height:13px;">10</div>
 <div class="docktitle" style="left:980px;top:643px;">PTZ</div>
 <div class="le" style="left:1029.3px;top:640.4px;width:74.6px;height:19.4px;background:#f3f3f3;"></div>
 <div class="docktitle" style="left:1034.6px;top:643px;">cam1</div>
 <div class="docktitle" style="left:1126.2px;top:432.4px;">P:</div>
 <div class="le" style="left:1143.8px;top:428.2px;width:163px;height:21.6px;"></div>
 <div class="ph" style="left:1146.6px;top:432.4px;">(-180~180&#9702;)</div>
 <div class="docktitle" style="left:1126.2px;top:502.2px;">T:</div>
 <div class="le" style="left:1143.8px;top:498px;width:163px;height:21.6px;"></div>
 <div class="ph" style="left:1146.6px;top:502.6px;">(-25~90&#9702;)</div>
 <div class="docktitle" style="left:1126.2px;top:572px;">Z:</div>
 <div class="le" style="left:1143.8px;top:568.2px;width:163px;height:21.6px;"></div>
 <div class="ph" style="left:1146.6px;top:572.6px;">(1~20)</div>
 <div class="btn" style="left:1154px;top:595.3px;width:73.2px;height:21.2px;line-height:20.4px;">request</div>
 <div class="btn" style="left:1233.2px;top:595.3px;width:73.6px;height:21.2px;line-height:20.4px;">reset</div>
 <div class="abs" style="left:1312.2px;top:428.4px;width:169px;height:214.2px;border:1px solid #c9c9c9;box-sizing:border-box;"></div>
 <div class="abs" style="left:1347px;top:647.4px;font-size:15.7px;line-height:20px;">Schematic</div>
 <div class="abs" style="left:1346.6px;top:455.6px;font-size:16.8px;line-height:22px;font-weight:bold;color:#111;letter-spacing:-.3px;z-index:6;">Tilt</div>
 <div class="abs" style="left:1428.4px;top:534px;font-size:16.9px;line-height:22px;font-weight:bold;color:#111;letter-spacing:-.3px;z-index:6;">Pan</div>


 <!-- bottom: minimized dock + status bar -->
 <div class="docktitle" style="left:38.5px;top:698px;">Virtual Joystic...</div>
 <div class="abs" style="left:0;top:720.6px;width:1500px;height:1px;background:#c6c6c6;"></div>

</div>
</body>
</html>
